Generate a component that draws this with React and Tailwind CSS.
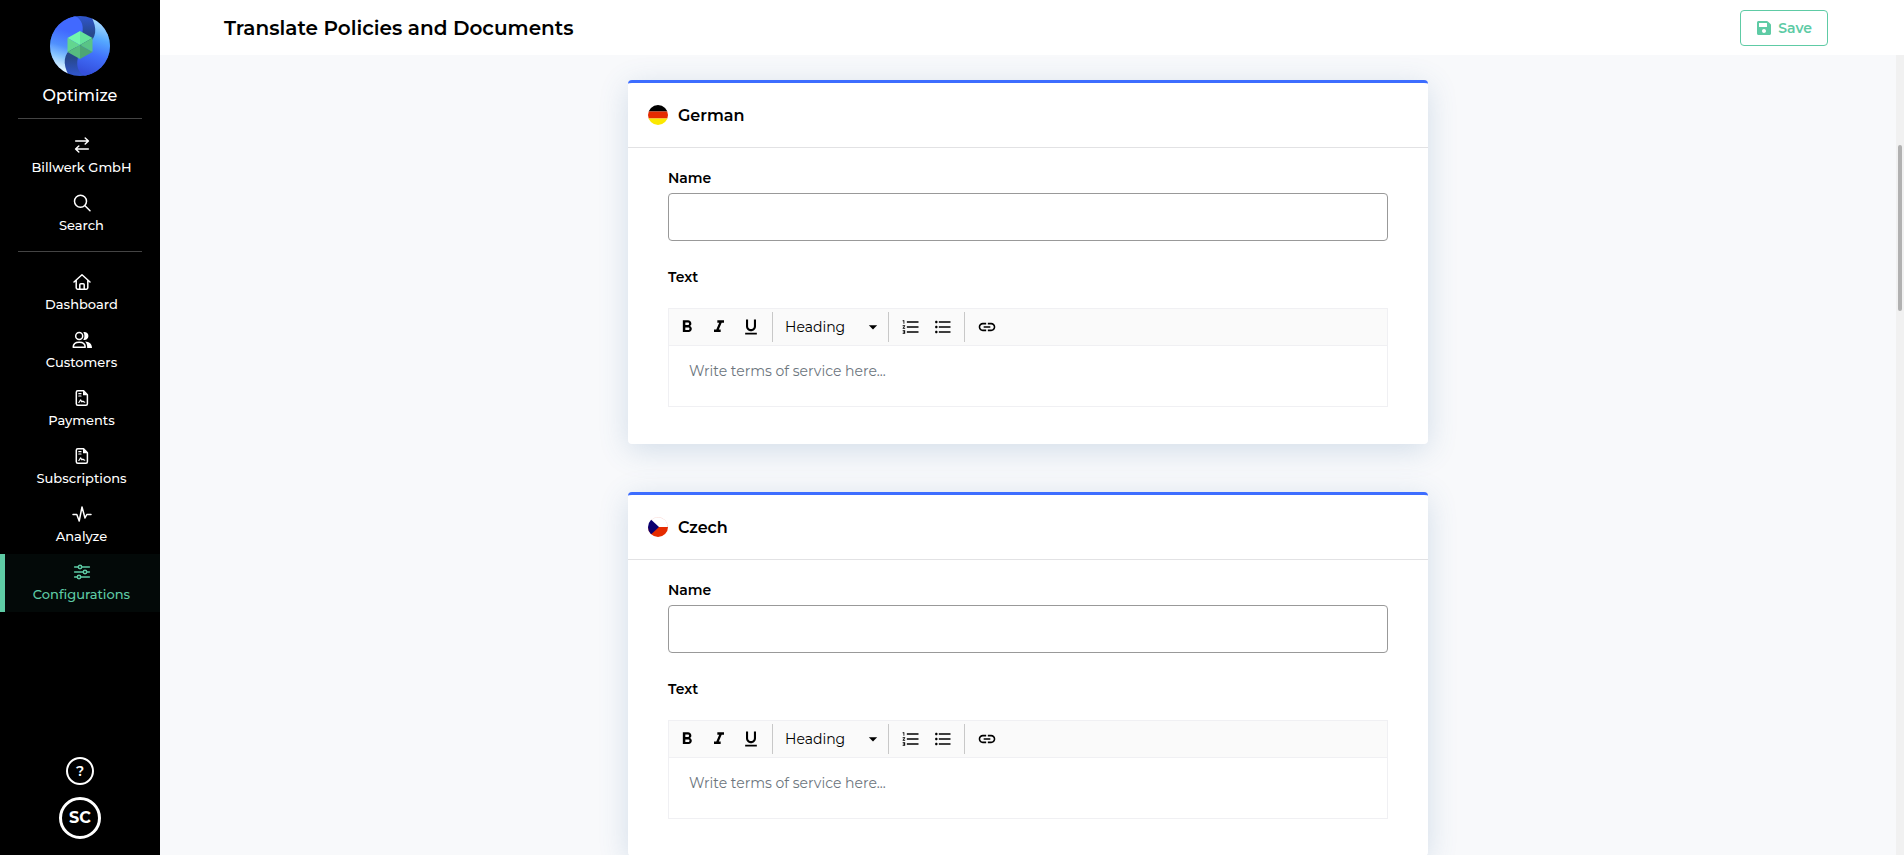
import React from 'react';
import { FaSave } from 'react-icons/fa';
import {
  MdArrowDropDown,
  MdFormatBold,
  MdFormatItalic,
  MdFormatListBulleted,
  MdFormatListNumbered,
  MdFormatUnderlined,
  MdInsertLink,
} from 'react-icons/md';

function NavIcon({ children }) {
  return (
    <svg viewBox="0 0 20 20" className="h-5 w-5" fill="none" stroke="currentColor" strokeWidth="1.5" strokeLinecap="round" strokeLinejoin="round" aria-hidden="true">
      {children}
    </svg>
  );
}

const documentIcon = (
  <NavIcon>
    <path d="M5.8 2.700h5.800l3.800 4v9.100a1.500 1.500 0 0 1-1.500 1.500H5.800a1.500 1.500 0 0 1-1.500-1.500V4.200a1.500 1.500 0 0 1 1.500-1.500Z" />
    <path d="M11 2.500v4.800h4.600Z" fill="currentColor" stroke="none" />
    <path d="M6.800 5.700h2.200M6.800 8h2.200M6.800 14.300c1 0 1.200-2.400 1.900-2.400s.5 2 1.100 2 .6-.9 1.100-.9.4 1.200 1.800 1.200" strokeWidth="1.200" />
  </NavIcon>
);

const accountLinks = [
  {
    label: 'Billwerk GmbH',
    icon: (
      <NavIcon>
        <path d="M3.700 6h12.300M13.200 3l3.200 3-3.200 3M16.300 14H4M6.800 11l-3.200 3 3.200 3" />
      </NavIcon>
    ),
  },
  {
    label: 'Search',
    icon: (
      <NavIcon>
        <circle cx="8.500" cy="8.300" r="6" />
        <path d="m13 12.800 5 5" />
      </NavIcon>
    ),
  },
];

const mainLinks = [
  {
    label: 'Dashboard',
    icon: (
      <NavIcon>
        <path d="m2 10 8-7.200 8 7.200M4.200 8.600v7.200a1.400 1.400 0 0 0 1.400 1.400h8.800a1.400 1.400 0 0 0 1.400-1.400V8.600" />
        <path d="M7.800 17v-4.300a1 1 0 0 1 1-1h2.400a1 1 0 0 1 1 1V17" />
      </NavIcon>
    ),
  },
  {
    label: 'Customers',
    icon: (
      <NavIcon>
        <circle cx="7.200" cy="6" r="3.500" />
        <path d="M1.200 17.300c0-3.300 2.300-5 6-5s6 1.700 6 5Z" />
        <path d="M11.300 2.300a3.900 3.900 0 1 1 0 7.400c1.500-2.200 1.500-5.200 0-7.400ZM13 11.400c4.200.1 7 2.200 7 6.600h-4.800c.1-2.900-.5-4.900-2.200-6.600Z" fill="currentColor" stroke="none" />
      </NavIcon>
    ),
  },
  { label: 'Payments', icon: documentIcon },
  { label: 'Subscriptions', icon: documentIcon },
  {
    label: 'Analyze',
    icon: (
      <NavIcon>
        <path d="M1 10.500h3.800L7.200 17 10 3l3 11 1.800-3.500H19" />
      </NavIcon>
    ),
  },
  {
    label: 'Configurations',
    active: true,
    icon: (
      <NavIcon>
        <path d="M2.600 5h3.700M9.700 5h7.700M2.600 10h8.700M14.700 10h2.700M2.600 15h2.700M8.700 15h8.700" />
        <circle cx="8" cy="5" r="1.700" />
        <circle cx="13" cy="10" r="1.700" />
        <circle cx="7" cy="15" r="1.700" />
      </NavIcon>
    ),
  },
];

function Logo() {
  return (
    <svg viewBox="0 0 60 60" className="h-15 w-15" aria-hidden="true">
      <defs>
        <clipPath id="disc">
          <circle cx="30" cy="30" r="30" />
        </clipPath>
        <linearGradient id="left" gradientUnits="userSpaceOnUse" x1="24" y1="6" x2="8" y2="56">
          <stop offset="0.200" stopColor="#4169ff" />
          <stop offset="0.500" stopColor="#5090fd" />
          <stop offset="0.700" stopColor="#86c4ff" />
          <stop offset="0.950" stopColor="#e6f8ff" />
        </linearGradient>
        <linearGradient id="right" gradientUnits="userSpaceOnUse" x1="52" y1="4" x2="34" y2="56">
          <stop offset="0" stopColor="#b4e2ff" />
          <stop offset="0.350" stopColor="#55a8ff" />
          <stop offset="0.650" stopColor="#4170fb" />
          <stop offset="1" stopColor="#3450dc" />
        </linearGradient>
        <linearGradient id="fold" x1="0" y1="0" x2="0" y2="1">
          <stop offset="0" stopColor="#3056cf" />
          <stop offset="0.300" stopColor="#27488c" />
          <stop offset="0.700" stopColor="#27488c" />
          <stop offset="1" stopColor="#3056cf" />
        </linearGradient>
      </defs>
      <g clipPath="url(#disc)">
        <path d="M0 0h60v60H0Z" fill="url(#fold)" />
        <path d="M25 0c7 3 10 11 6 22l-1 8-8 2c-8 6-10 15-3 28H0V0Z" fill="url(#left)" />
        <path d="M35 60c-7-3-10-11-6-22l1-8 8-2c8-6 10-15 3-28h19v60Z" fill="url(#right)" />
      </g>
      <path d="M30 15 42.500 22 30 29Z" fill="#65e39b" />
      <path d="M30 15 17.500 22 30 29Z" fill="#72f5ae" />
      <path d="M17.500 22v14L30 29Z" fill="#62d68f" />
      <path d="M42.500 22v14L30 29Z" fill="#59c486" />
      <path d="M17.500 36 30 43V29Z" fill="#57bb80" />
      <path d="M42.500 36 30 43V29Z" fill="#4da574" />
    </svg>
  );
}

function NavItem({ item }) {
  return (
    <li>
      <a
        href="#"
        className={
          item.active
            ? 'flex h-[58px] flex-col items-center border-l-5 border-[#5ecba5] bg-[#030908] pt-2 pr-0.5 text-[#5ecba5]'
            : 'flex h-[58px] flex-col items-center border-l-5 border-black pt-2 pr-0.5 text-white'
        }
      >
        {item.icon}
        <span className="mt-0.5 text-[13px] leading-5 font-medium">{item.label}</span>
      </a>
    </li>
  );
}

function Sidebar() {
  return (
    <aside className="flex w-40 shrink-0 flex-col items-center bg-black text-white">
      <div className="flex flex-col items-center pt-4">
        <Logo />
        <span className="mt-2 text-base leading-6 font-medium">Optimize</span>
      </div>
      <hr className="mt-2.5 w-31 border-[#444]" />
      <nav className="w-full">
        <ul className="pt-2">
          {accountLinks.map((item) => (
            <NavItem key={item.label} item={item} />
          ))}
        </ul>
        <hr className="mx-auto mt-2 w-31 border-[#444]" />
        <ul className="pt-3">
          {mainLinks.map((item) => (
            <NavItem key={item.label} item={item} />
          ))}
        </ul>
      </nav>
      <div className="mt-auto flex flex-col items-center gap-3 pb-4">
        <button className="flex h-7 w-7 items-center justify-center rounded-full border-2 border-white text-sm font-semibold">?</button>
        <button className="flex h-[42px] w-[42px] items-center justify-center rounded-full border-3 border-white text-base font-bold">SC</button>
      </div>
    </aside>
  );
}

function GermanFlag() {
  return (
    <svg viewBox="0 0 20 20" className="h-5 w-5" aria-hidden="true">
      <clipPath id="flagDe">
        <circle cx="10" cy="10" r="10" />
      </clipPath>
      <g clipPath="url(#flagDe)">
        <path d="M0 0h20v6.500H0Z" fill="#000" />
        <path d="M0 6.500h20v7H0Z" fill="#e52b00" />
        <path d="M0 13.500h20V20H0Z" fill="#fbe800" />
      </g>
    </svg>
  );
}

function CzechFlag() {
  return (
    <svg viewBox="0 0 20 20" className="h-5 w-5" aria-hidden="true">
      <clipPath id="flagCz">
        <circle cx="10" cy="10" r="10" />
      </clipPath>
      <g clipPath="url(#flagCz)">
        <path d="M0 0h20v10H0Z" fill="#fff" />
        <path d="M0 10h20v10H0Z" fill="#e52b00" />
        <path d="M0 0v20l3.500-3L11 10 3.500 3Z" fill="#0b0070" />
        <path d="M3 3a9.800 9.800 0 0 1 16.800 7" fill="none" stroke="#f3b9b0" strokeWidth="0.600" />
      </g>
    </svg>
  );
}

function Toolbar() {
  return (
    <div className="flex h-[38px] items-center border border-[#f0f0f3] bg-[#fafafa] text-black">
      <div className="flex h-[30px] items-center gap-2 border-r border-[#c8c8c8] pr-[9px] pl-1.5">
        <button aria-label="Bold" className="flex h-6 w-6 items-center justify-center"><MdFormatBold size={20} /></button>
        <button aria-label="Italic" className="flex h-6 w-6 items-center justify-center"><MdFormatItalic size={20} /></button>
        <button aria-label="Underline" className="flex h-6 w-6 items-center justify-center"><MdFormatUnderlined size={20} /></button>
      </div>
      <div className="relative flex h-[30px] items-center border-r border-[#c8c8c8]">
        <select aria-label="Text style" className="h-[30px] w-[115px] appearance-none bg-transparent pl-3 text-sm">
          <option>Heading</option>
        </select>
        <MdArrowDropDown size={20} className="pointer-events-none absolute right-[5px]" />
      </div>
      <div className="flex h-[30px] items-center gap-2 border-r border-[#c8c8c8] pr-[9px] pl-2.5">
        <button aria-label="Numbered list" className="flex h-6 w-6 items-center justify-center"><MdFormatListNumbered size={20} /></button>
        <button aria-label="Bulleted list" className="flex h-6 w-6 items-center justify-center"><MdFormatListBulleted size={20} /></button>
      </div>
      <button aria-label="Link" className="ml-2.5 flex h-6 w-6 items-center justify-center"><MdInsertLink size={20} /></button>
    </div>
  );
}

function LanguageCard({ id, title, flag }) {
  return (
    <section className="w-full max-w-[800px] rounded border-t-3 border-[#3d6dff] bg-white shadow-[0_6px_30px_rgba(60,110,160,0.2)]">
      <header className="flex items-center gap-2.5 border-b border-[#e2e2e4] px-5 py-[19px]">
        {flag}
        <h2 className="pt-0.5 text-base leading-6 font-semibold">{title}</h2>
      </header>
      <div className="px-10 pt-5 pb-[37px]">
        <label htmlFor={id + '-name'} className="block text-sm leading-5 font-semibold">Name</label>
        <input id={id + '-name'} type="text" className="mt-[5px] block h-12 w-full rounded border border-[#999] bg-white px-4 text-sm outline-none" />
        <label htmlFor={id + '-text'} className="mt-[26px] mb-[21px] block text-sm leading-5 font-semibold">Text</label>
        <Toolbar />
        <textarea
          id={id + '-text'}
          placeholder="Write terms of service here..."
          className="block h-[61px] w-full resize-none border border-t-0 border-[#f0f0f3] px-5 pt-[15px] text-sm leading-5 outline-none placeholder:text-[#6c757d]"
        />
      </div>
    </section>
  );
}

export default function App() {
  return (
    <div className="flex h-screen overflow-hidden bg-[#f8f9fb] font-['Montserrat',Inter,sans-serif] text-black">
      <Sidebar />
      <div className="flex min-w-0 flex-1 flex-col">
        <header className="flex h-[55px] shrink-0 items-center justify-between bg-white pr-19 pl-16">
          <h1 className="text-xl font-semibold">Translate Policies and Documents</h1>
          <button className="flex h-9 items-center gap-1.5 rounded border border-[#5ecba5] px-[15px] text-sm font-semibold text-[#5ecba5]">
            <FaSave size={16} />
            Save
          </button>
        </header>
        <div className="flex min-h-0 flex-1">
          <main className="flex min-w-0 flex-1 flex-col items-center gap-12 overflow-hidden pt-[25px]">
            <LanguageCard id="german" title="German" flag={<GermanFlag />} />
            <LanguageCard id="czech" title="Czech" flag={<CzechFlag />} />
          </main>
          <div className="w-2 bg-[#f1f1f1] px-0.5 pt-[90px]">
            <div className="h-[166px] rounded-full bg-[#b1b1b1]" />
          </div>
        </div>
      </div>
    </div>
  );
}
